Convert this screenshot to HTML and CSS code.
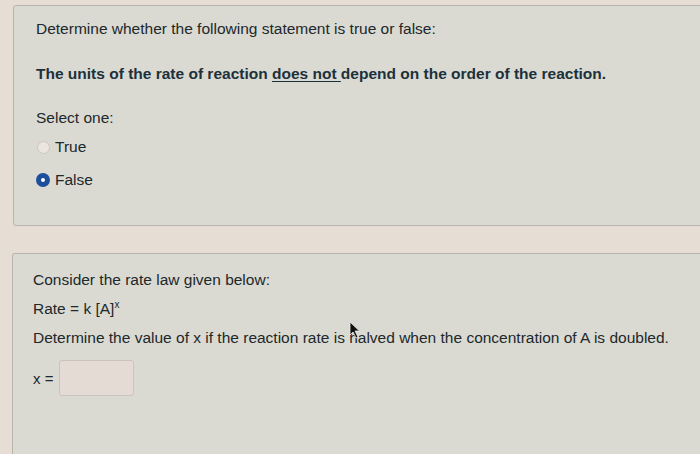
FILE: index.html
```html
<!DOCTYPE html>
<html>
<head>
<meta charset="utf-8">
<link rel="stylesheet" href="styles.css">
</head>
<body>
<div class="page">
  <div class="card card-one">
    <p class="line intro">Determine whether the following statement is true or false:</p>
    <p class="line statement">The units of the rate of reaction <span class="ul">does not </span>depend on the order of the reaction.</p>
    <p class="line select">Select one:</p>
    <div class="option opt-true"><span class="radio radio-off"></span><span class="label">True</span></div>
    <div class="option opt-false"><span class="radio radio-on"></span><span class="label">False</span></div>
  </div>
  <div class="card card-two">
    <p class="line c2-first">Consider the rate law given below:</p>
    <p class="line c2-rate">Rate = k [A]<sup class="sup">x</sup></p>
    <p class="line c2-q">Determine the value of x if the reaction rate is halved when the concentration of A is doubled.</p>
    <div class="answer"><span class="xeq">x =</span><span class="input"></span></div>
    <svg class="cursor" width="12" height="18" viewBox="0 0 12 18"><path d="M1 1 L1 14 L4 11 L7 17 L9 16 L6 10 L10.5 10 Z" fill="#111" stroke="#eee" stroke-width="0.8"/></svg>
  </div>
</div>
</body>
</html>
```

FILE: styles.css
```css
html, body {
  margin: 0;
  padding: 0;
  overflow: hidden;
}
body {
  background: #e6ddd4;
  font-family: "Liberation Sans", Arial, sans-serif;
  font-size: 15.5px;
  color: #20282b;
  width: 700px;
  height: 454px;
}
.page {
  padding: 5px 0 0 13px;
  display: flex;
  flex-direction: column;
  gap: 27px;
}
.card {
  background: #dbdad2;
  border: 1px solid #b7b5ad;
  border-radius: 3px;
  margin-right: -20px;
  position: relative;
}
.card-one {
  padding: 13px 0 0 22px;
  box-sizing: border-box;
  height: 221px;
}
.card-two {
  margin-left: -1px;
  padding: 16px 0 0 20px;
  box-sizing: border-box;
  height: 201px;
  border-bottom: none;
  border-radius: 3px 3px 0 0;
}
.line {
  margin: 0;
  line-height: 20px;
  white-space: nowrap;
}
.statement {
  margin-top: 25px;
  font-weight: bold;
  color: #1b313c;
}
.ul {
  text-decoration: underline;
  text-underline-offset: 2px;
}
.select {
  margin-top: 24px;
}
.option {
  display: flex;
  align-items: center;
  height: 20px;
  gap: 5px;
}
.opt-true {
  margin-top: 9px;
  padding-left: 1px;
}
.opt-false {
  margin-top: 13px;
}
.radio {
  width: 14px;
  height: 14px;
  border-radius: 50%;
  box-sizing: border-box;
  flex: none;
}
.radio-off {
  background: #ece5de;
  border: 1px solid #cdc6be;
  width: 13px;
  height: 13px;
}
.radio-on {
  background: #fff;
  border: 5px solid #1c4e9c;
}
.c2-rate, .c2-q {
  margin-top: 9px;
}
.sup {
  font-size: 10px;
  line-height: 0;
  vertical-align: 6px;
}
.answer {
  margin-top: 12px;
  display: flex;
  align-items: center;
  gap: 6px;
}
.xeq {
  font-size: 15px;
}
.input {
  width: 75px;
  height: 36px;
  box-sizing: border-box;
  border: 1px solid #cbc3bb;
  border-radius: 3px;
  background: #e4dbd5;
}
.cursor {
  position: absolute;
  left: 336px;
  top: 67px;
}
```
